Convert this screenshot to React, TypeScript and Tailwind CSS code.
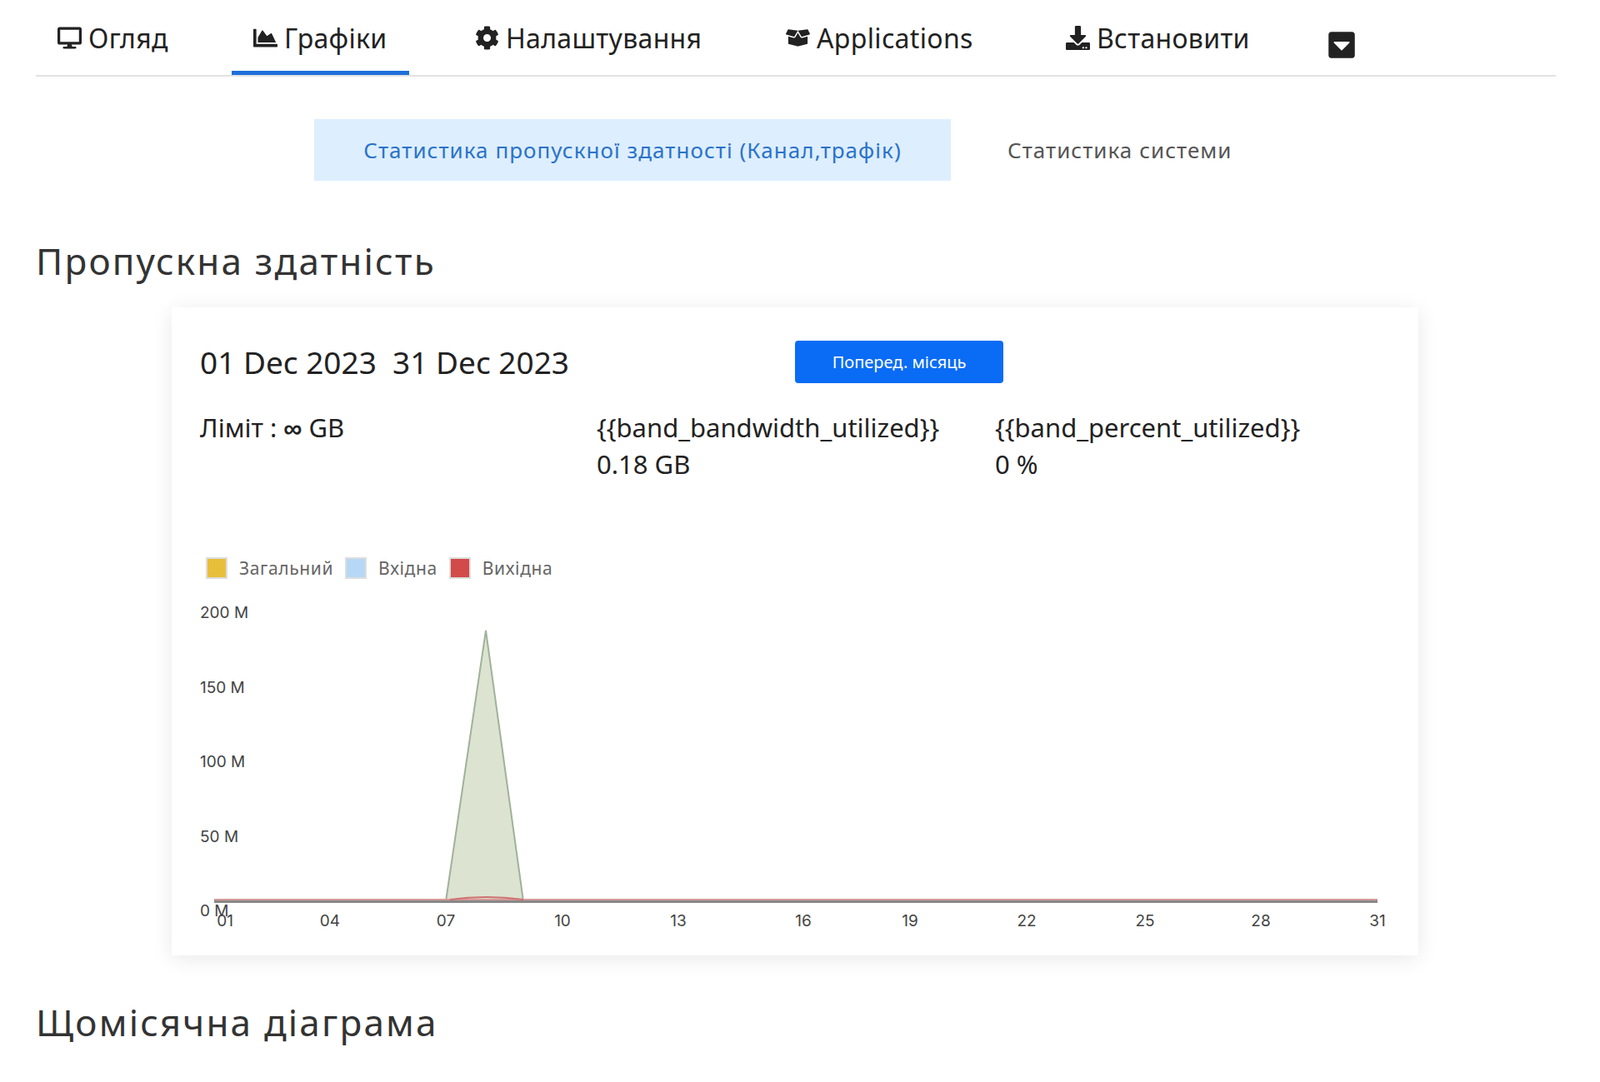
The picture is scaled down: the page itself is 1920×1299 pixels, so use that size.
import { FaDesktop, FaChartArea, FaCog, FaBoxOpen, FaDownload, FaCaretSquareDown } from "react-icons/fa";

const NAV = [
  { icon: <FaDesktop />, label: "Огляд", w: "w-[235px]" },
  { icon: <FaChartArea />, label: "Графіки", w: "w-[266px]", active: true },
  { icon: <FaCog />, label: "Налаштування", w: "w-[373px]" },
  { icon: <FaBoxOpen />, label: "Applications", w: "w-[336px]" },
  { icon: <FaDownload />, label: "Встановити", w: "w-[313px]" },
];

const Y_LABELS = [
  { t: "200 M", y: 12 },
  { t: "150 M", y: 102 },
  { t: "100 M", y: 191 },
  { t: "50 M", y: 281 },
  { t: "0 M", y: 370 },
];

const X_LABELS: [string, number][] = [
  ["01", 30], ["04", 156], ["07", 295], ["10", 435], ["13", 574], ["16", 724],
  ["19", 852], ["22", 992], ["25", 1134], ["28", 1273], ["31", 1413],
];

function Chart() {
  return (
    <svg width="1430" height="400" viewBox="0 0 1430 400" className="block">
      {Y_LABELS.map((l) => (
        <text key={l.t} x="0" y={l.y + 6} fontSize="19" fill="#444" fontFamily="Inter, sans-serif">
          {l.t}
        </text>
      ))}
      <polygon points="295,358 343,33 388,358" fill="#dce3d0" stroke="#9fb29a" strokeWidth="2" />
      <line x1="17" y1="358" x2="1413" y2="358" stroke="#888" strokeWidth="4" />
      <line x1="17" y1="356" x2="1413" y2="356" stroke="#d59a9a" strokeWidth="2" />
      <path d="M300,356 Q343,350 388,356" stroke="#d07070" strokeWidth="2" fill="none" />
      {X_LABELS.map(([t, x]) => (
        <text key={t} x={x} y={388} fontSize="19" fill="#444" textAnchor="middle" fontFamily="Inter, sans-serif">
          {t}
        </text>
      ))}
    </svg>
  );
}

export default function App() {
  return (
    <div className="min-h-[1299px] bg-white font-['Inter',sans-serif] text-[#222]">
      <div className="px-[43px]">
        <nav className="mr-[10px] flex h-[92px] items-end border-b-2 border-[#e2e2e2] pl-[26px]">
          {NAV.map((n) => (
            <div key={n.label} className={`${n.w} flex h-full items-stretch`}>
              <div
                className={`flex items-center gap-2 border-b-[5px] pt-[6px] text-[32px] leading-none tracking-[0.01em] ${
                  n.active ? "border-[#1e6fd9] -ml-[26px] px-[26px]" : "border-transparent"
                }`}
              >
                <span className="text-[29px]">{n.icon}</span>
                {n.label}
              </div>
            </div>
          ))}
          <div className="flex h-full items-center pt-[18px] text-[36px]">
            <FaCaretSquareDown />
          </div>
        </nav>

        <div className="mt-[51px] flex items-center pl-[334px]">
          <div className="flex h-[74px] w-[764px] items-center justify-center bg-[#ddeeff] text-[26px] tracking-[0.04em] text-[#2b73c9]">
            Статистика пропускної здатності (Канал,трафік)
          </div>
          <div className="ml-[68px] text-[26px] tracking-[0.04em] text-[#555]">Статистика системи</div>
        </div>

        <h2 className="mt-[74px] font-['Open_Sans',sans-serif] text-[44px] leading-none tracking-[0.05em] text-[#333]">
          Пропускна здатність
        </h2>

        <div className="ml-[163px] mt-[34px] h-[778px] w-[1496px] bg-white pl-[34px] pt-[38px] shadow-[0_4px_24px_rgba(0,0,0,0.09)]">
          <div className="flex items-center">
            <div className="w-[714px] text-[37px] text-[#222]">01 Dec 2023&nbsp; 31 Dec 2023</div>
            <button className="h-[51px] w-[250px] rounded bg-[#0a6cf5] text-[20px] text-white">Поперед. місяць</button>
          </div>
          <div className="mt-[28px] flex text-[31px] leading-[44px]">
            <div className="w-[476px]">
              Ліміт : <span className="font-black">∞</span> GB
            </div>
            <div>
              <div className="flex">
                <span className="w-[478px]">{"{{band_bandwidth_utilized}}"}</span>
                <span>{"{{band_percent_utilized}}"}</span>
              </div>
              <div className="flex">
                <span className="w-[478px]">0.18 GB</span>
                <span>0 %</span>
              </div>
            </div>
          </div>
          <div className="mt-[88px] flex items-center gap-[14px] pl-[7px] text-[21px] tracking-[0.03em] text-[#666]">
            <span className="flex items-center gap-[14px]"><span className="h-[26px] w-[26px] border-2 border-[#ddd] bg-[#e8bf3a]" />Загальний</span>
            <span className="flex items-center gap-[14px]"><span className="h-[26px] w-[26px] border-2 border-[#ddd] bg-[#b6d8f6]" />Вхідна</span>
            <span className="flex items-center gap-[14px]"><span className="h-[26px] w-[26px] border-2 border-[#ddd] bg-[#d24a4a]" />Вихідна</span>
          </div>
          <div className="mt-[26px]">
            <Chart />
          </div>
        </div>

        <h2 className="mt-[58px] font-['Open_Sans',sans-serif] text-[44px] leading-none tracking-[0.05em] text-[#333]">
          Щомісячна діаграма
        </h2>
      </div>
    </div>
  );
}
